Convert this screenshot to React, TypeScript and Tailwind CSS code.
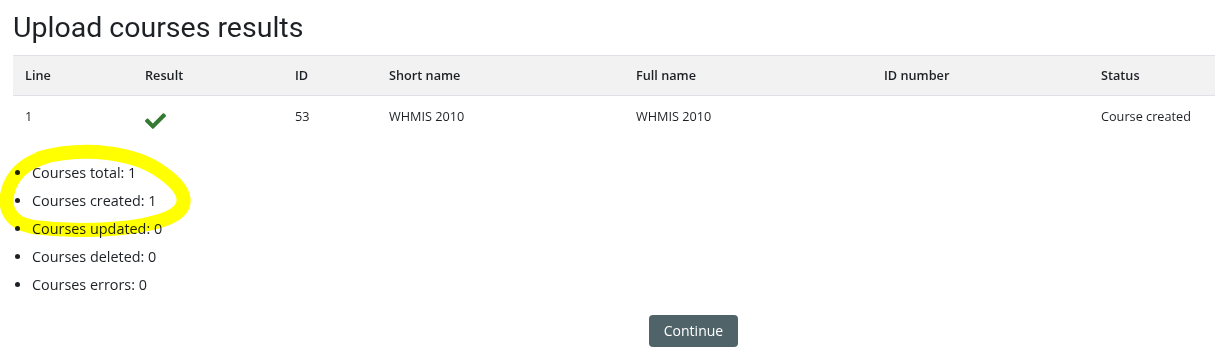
import React from 'react'

const columns = [
  { label: 'Line', w: 'w-[120px]' },
  { label: 'Result', w: 'w-[150px]' },
  { label: 'ID', w: 'w-[94px]' },
  { label: 'Short name', w: 'w-[247px]' },
  { label: 'Full name', w: 'w-[248px]' },
  { label: 'ID number', w: 'w-[217px]' },
  { label: 'Status', w: 'w-[160px]' },
]

const stats = [
  'Courses total: 1',
  'Courses created: 1',
  'Courses updated: 0',
  'Courses deleted: 0',
  'Courses errors: 0',
]

const Check = () => (
  <svg width="21" height="16" viewBox="0 0 512 390" className="inline-block">
    <path
      fill="#357a32"
      d="M173.9 380.5L7.5 214.1c-10-10-10-26.2 0-36.2l36.2-36.2c10-10 26.2-10 36.2 0L192 253.8 432.1 13.7c10-10 26.2-10 36.2 0l36.2 36.2c10 10 10 26.2 0 36.2L210.1 380.5c-10 10-26.2 10-36.2 0z"
    />
  </svg>
)

const App = () => {
  return (
    <div className="relative h-[362px] w-[1215px] overflow-hidden bg-white text-[#1d2125] font-['Open_Sans',sans-serif]">
      <div className="px-[13px]">
        <h2 className="pt-[8px] text-[28.5px] leading-[40px] font-['Roboto',sans-serif] font-normal text-[#1d2125]">
          Upload courses results
        </h2>

        <table className="mt-[7px] w-[1236px] table-fixed border-collapse text-[12.7px]">
          <thead>
            <tr className="bg-[#f2f2f2] border-y border-[#dee2e6]">
              {columns.map((c) => (
                <th key={c.label} className={`${c.w} h-[40px] px-3 text-left font-semibold`}>
                  {c.label}
                </th>
              ))}
            </tr>
          </thead>
          <tbody>
            <tr className="h-[42px]">
              <td className="px-3">1</td>
              <td className="px-3 pt-[6px]">
                <Check />
              </td>
              <td className="px-3">53</td>
              <td className="px-3">WHMIS 2010</td>
              <td className="px-3">WHMIS 2010</td>
              <td className="px-3"></td>
              <td className="px-3">Course created</td>
            </tr>
          </tbody>
        </table>

        <ul className="mt-[21px] list-disc pl-[19px] text-[14.4px] leading-[28px] text-[#1d2125]">
          {stats.map((s) => (
            <li key={s}>{s}</li>
          ))}
        </ul>

        <div className="mt-[16px] pl-[636px]">
          <button className="h-[32px] w-[89px] rounded-[4px] bg-[#4f6369] text-[14px] text-white">
            Continue
          </button>
        </div>
      </div>

      {/* yellow marker scribble */}
      <svg className="pointer-events-none absolute left-0 top-0" width="1215" height="362">
        <path
          d="M 40 158 C 85 146, 135 152, 163 173 C 188 191, 191 208, 168 218 C 138 230, 80 233, 33 227 C 5 222, 3 202, 10 185 C 17 170, 28 162, 48 156"
          fill="none"
          stroke="#ffff00"
          strokeWidth="14"
          strokeLinecap="round"
          strokeLinejoin="round"
          style={{ mixBlendMode: 'multiply' }}
        />
      </svg>
    </div>
  )
}

export default App
